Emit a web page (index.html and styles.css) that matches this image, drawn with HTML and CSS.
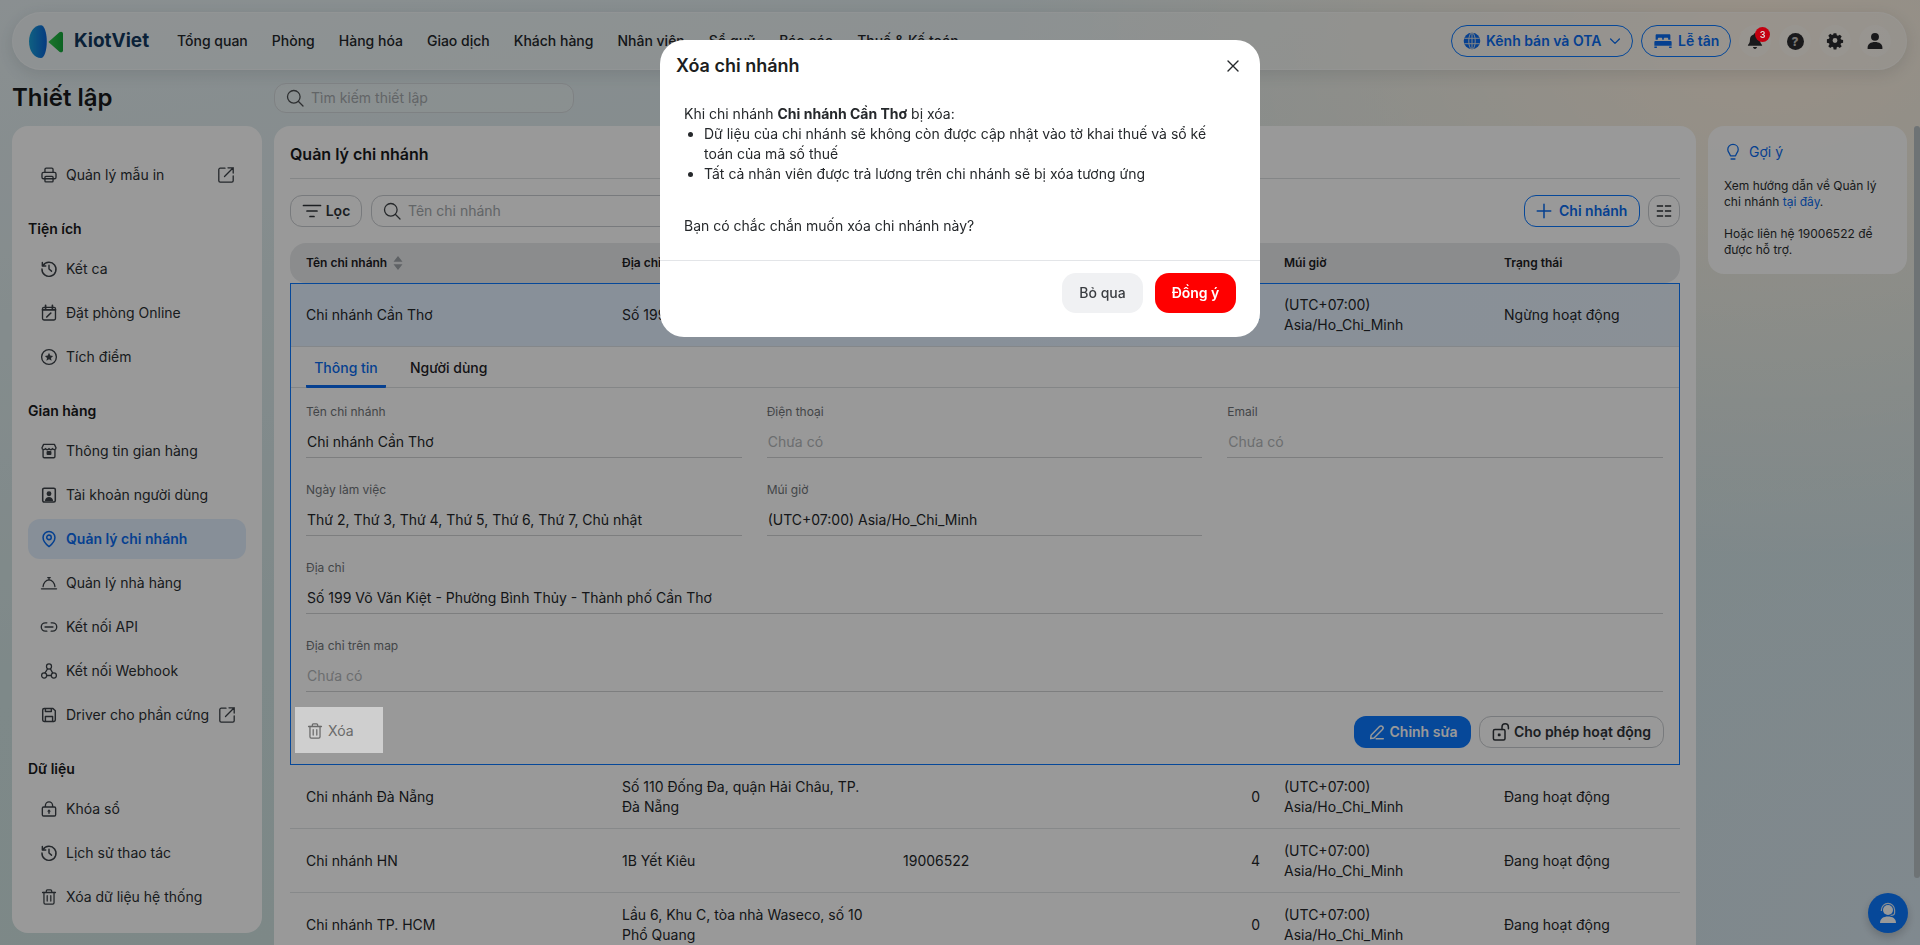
FILE: index.html
```html
<!DOCTYPE html>
<html lang="vi">
<head>
<meta charset="utf-8">
<title>Thiết lập - Quản lý chi nhánh</title>
<link rel="stylesheet" href="styles.css">
</head>
<body>
<svg class="defs" width="0" height="0" aria-hidden="true">
  <defs>
    <linearGradient id="lgBlue" x1="0" y1="0" x2="1" y2="0"><stop offset="0" stop-color="#1aa0d8"/><stop offset="1" stop-color="#0a63d6"/></linearGradient>
    <linearGradient id="lgGreen" x1="0" y1="0" x2="1" y2="0"><stop offset="0" stop-color="#2fc44a"/><stop offset="1" stop-color="#14a53a"/></linearGradient>
    <symbol id="i-search" viewBox="0 0 20 20"><circle cx="8.8" cy="8.8" r="6.3" fill="none" stroke="currentColor" stroke-width="1.3"/><path d="M13.5 13.5 18 18" fill="none" stroke="currentColor" stroke-width="1.3" stroke-linecap="round"/></symbol>
    <symbol id="i-print" viewBox="0 0 20 20"><g fill="none" stroke="currentColor" stroke-width="1.5" stroke-linejoin="round"><path d="M5.5 7V3.8c0-.9.6-1.4 1.4-1.4h6.2c.8 0 1.4.5 1.4 1.4V7"/><rect x="2.2" y="7" width="15.6" height="7.2" rx="1.8"/><rect x="5.5" y="11.5" width="9" height="6.2" rx="1"/></g></symbol>
    <symbol id="i-ext" viewBox="0 0 20 20"><g fill="none" stroke="currentColor" stroke-width="1.3" stroke-linecap="round" stroke-linejoin="round"><path d="M9 3.200H4.200c-.8 0-1.400.6-1.400 1.400v11.200c0 .8.6 1.400 1.400 1.400h11.600c.8 0 1.400-.6 1.400-1.400V11"/><path d="M8.500 11.500 17.200 2.800M12 2.800h5.200V8"/></g></symbol>
    <symbol id="i-history" viewBox="0 0 20 20"><g fill="none" stroke="currentColor" stroke-width="1.6" stroke-linecap="round" stroke-linejoin="round"><path d="M3.400 6.200A7.800 7.800 0 1 1 2.200 10"/><path d="M2.600 2.800v3.800h3.800"/><path d="M10 5.800V10l2.800 2.400"/></g></symbol>
    <symbol id="i-cal" viewBox="0 0 20 20"><g fill="none" stroke="currentColor" stroke-width="1.5" stroke-linecap="round"><rect x="2.800" y="3.800" width="14.400" height="14" rx="1.600"/><path d="M6.200 1.600v3.600M13.800 1.600v3.600M2.800 6.500h14.400" stroke-width="1.900"/><path d="M7.500 14.500l4.500-4.500" stroke-width="1.800"/></g></symbol>
    <symbol id="i-star" viewBox="0 0 20 20"><circle cx="10" cy="10" r="8.200" fill="none" stroke="currentColor" stroke-width="1.500"/><path d="M10 5.400l1.400 3 3.200.4-2.400 2.200.7 3.200-2.900-1.600-2.900 1.600.7-3.200-2.400-2.200 3.200-.4z" fill="currentColor"/></symbol>
    <symbol id="i-store" viewBox="0 0 20 20"><g fill="none" stroke="currentColor" stroke-width="1.500" stroke-linejoin="round"><path d="M4 2.600h12l1.800 3.800c0 2.600-3.200 2.600-3.900.9-.8 1.700-3.100 1.700-3.900 0-.8 1.700-3.100 1.700-3.900 0-.7 1.700-3.900 1.700-3.900-.9z"/><path d="M3.400 9v7.200c0 .8.6 1.300 1.300 1.300h10.600c.7 0 1.300-.5 1.300-1.300V9"/></g><rect x="7.300" y="10" width="5.400" height="4.400" rx="1" fill="currentColor"/></symbol>
    <symbol id="i-user-card" viewBox="0 0 20 20"><rect x="3" y="2.400" width="14" height="15.400" rx="1.600" fill="none" stroke="currentColor" stroke-width="1.700"/><circle cx="10" cy="8.600" r="2.700" fill="currentColor"/><path d="M5.400 16.600c.3-3 2.200-4.400 4.600-4.400s4.300 1.400 4.600 4.400z" fill="currentColor"/></symbol>
    <symbol id="i-pin" viewBox="0 0 20 20"><g fill="none" stroke="currentColor" stroke-width="1.700" stroke-linejoin="round"><path d="M10 18.400s-6.600-5.400-6.600-10.200a6.600 6.600 0 0 1 13.200 0c0 4.800-6.600 10.200-6.600 10.200z"/><circle cx="10" cy="8.200" r="2.500"/></g></symbol>
    <symbol id="i-bellhop" viewBox="0 0 20 20"><g fill="none" stroke="currentColor" stroke-width="1.400" stroke-linecap="round"><path d="M1.600 16.400h16.800"/><path d="M3.400 14c.4-4.200 3.200-7.400 6.600-7.400s6.200 3.200 6.600 7.400"/><path d="M8.600 4h2.800M10 4v2.400"/></g></symbol>
    <symbol id="i-link" viewBox="0 0 20 20"><g fill="none" stroke="currentColor" stroke-width="1.500" stroke-linecap="round"><path d="M7.600 5.400H6a4.600 4.600 0 0 0 0 9.200h1.600M12.400 5.400H14a4.600 4.600 0 0 1 0 9.200h-1.600M5.600 10h8.800"/></g></symbol>
    <symbol id="i-hook" viewBox="0 0 20 20"><g fill="none" stroke="currentColor" stroke-width="1.400"><circle cx="10" cy="5" r="2.800"/><circle cx="4.600" cy="15" r="2.800"/><circle cx="15.400" cy="15" r="2.800"/><path d="M8.600 7.400 5.200 12.600M11.400 7.400l2.800 5M7.400 15h5.200"/></g></symbol>
    <symbol id="i-save" viewBox="0 0 20 20"><g fill="none" stroke="currentColor" stroke-width="1.600" stroke-linejoin="round"><path d="M3 4.400c0-.9.7-1.600 1.600-1.600h9.800l2.600 2.600v10.200c0 .9-.7 1.600-1.600 1.600H4.600c-.9 0-1.600-.7-1.600-1.600z"/><path d="M6 17v-5.400h8V17M6 2.800v3.400h6.600V2.800"/></g></symbol>
    <symbol id="i-lock" viewBox="0 0 20 20"><g fill="none" stroke="currentColor" stroke-width="1.500" stroke-linejoin="round"><rect x="2.600" y="7.800" width="14.800" height="10" rx="1.400"/><path d="M6 7.800V6a4 4 0 0 1 8 0v1.800"/></g><path d="M10 10.400l2.200 2.400h-1.400v2.400H9.200v-2.400H7.800z" fill="currentColor"/></symbol>
    <symbol id="i-trash" viewBox="0 0 20 20"><g fill="none" stroke="currentColor" stroke-width="1.400" stroke-linecap="round" stroke-linejoin="round"><path d="M2.800 5h14.400M7 5V3.400c0-.7.5-1.200 1.200-1.200h3.600c.7 0 1.200.5 1.200 1.200V5"/><path d="M4.400 5v11.400c0 .9.6 1.500 1.500 1.500h8.200c.9 0 1.500-.6 1.500-1.500V5M8 8.500v6M12 8.500v6"/></g></symbol>
    <symbol id="i-filter" viewBox="0 0 20 20"><path d="M1.500 4.500h17M5 10h10M8 15.500h4" fill="none" stroke="currentColor" stroke-width="1.700" stroke-linecap="round"/></symbol>
    <symbol id="i-plus" viewBox="0 0 20 20"><path d="M10 2.500v15M2.500 10h15" fill="none" stroke="currentColor" stroke-width="1.700" stroke-linecap="round"/></symbol>
    <symbol id="i-columns" viewBox="0 0 20 20"><path d="M2 4.500h7M11 4.500h7M2 10h7M11 10h7M2 15.500h7M11 15.500h7" fill="none" stroke="currentColor" stroke-width="1.800"/></symbol>
    <symbol id="i-pen" viewBox="0 0 20 20"><g fill="none" stroke="currentColor" stroke-width="1.600" stroke-linecap="round" stroke-linejoin="round"><path d="M3.400 13.600 12.800 4c1-1 2.400-1 3.300-.1.9.9.9 2.300 0 3.200L6.700 16.600l-3.700.8z"/><path d="M9 17.600h8"/></g></symbol>
    <symbol id="i-unlock" viewBox="0 0 20 20"><g fill="none" stroke="currentColor" stroke-width="1.500" stroke-linejoin="round"><rect x="2.400" y="7.600" width="11.600" height="10.400" rx="1.500"/><path d="M11 7.500V5a3.200 3.200 0 0 1 6.400 0v1.800" stroke-linecap="round"/></g><rect x="6.800" y="11.400" width="2.800" height="2.800" rx=".6" fill="currentColor"/></symbol>
    <symbol id="i-globe" viewBox="0 0 20 20"><circle cx="10" cy="10" r="9.200" fill="currentColor"/><g fill="none" stroke="#d9dcdd" stroke-width="1.100"><ellipse cx="10" cy="10" rx="3.600" ry="9.200"/><path d="M10 1v18M1.400 7h17.200M1.400 13h17.200"/></g></symbol>
    <symbol id="i-chevron" viewBox="0 0 20 20"><path d="M4.500 7.500 10 13l5.500-5.500" fill="none" stroke="currentColor" stroke-width="1.600" stroke-linecap="round" stroke-linejoin="round"/></symbol>
    <symbol id="i-bed" viewBox="0 0 20 20"><path d="M3 2.400h14c.7 0 1.200.5 1.200 1.200v5h-2.400V7.500c0-.7-.5-1.200-1.200-1.200h-2.600c-.7 0-1.200.5-1.200 1.200v1.100H9.200V7.500c0-.7-.5-1.200-1.200-1.200H5.400c-.7 0-1.200.5-1.200 1.200v1.100H1.800v-5c0-.7.5-1.200 1.200-1.200zM1.400 10h17.200c.6 0 1 .4 1 1v4.400H.4V11c0-.6.4-1 1-1zM.4 16.200h2.800v1.600H.4zM16.800 16.200h2.800v1.600h-2.800z" fill="currentColor"/></symbol>
    <symbol id="i-bell" viewBox="0 0 20 20"><path d="M10 1.400c.8 0 1.400.6 1.400 1.300 2.700.6 4.200 2.800 4.200 5.600 0 3.200 1 4.800 2.200 6.100.3.4.1 1-.5 1H2.700c-.6 0-.8-.6-.5-1 1.200-1.300 2.200-2.900 2.200-6.100 0-2.800 1.500-5 4.200-5.600 0-.7.6-1.300 1.400-1.300zM7.800 16.800h4.400c0 1.200-1 2-2.200 2s-2.200-.8-2.200-2z" fill="currentColor"/></symbol>
    <symbol id="i-gear" viewBox="0 0 20 20"><path fill-rule="evenodd" d="M8.300 1h3.400l.5 2.600 1.500.6 2.200-1.500 2.400 2.400-1.500 2.200.6 1.500 2.600.5v3.400l-2.600.5-.6 1.500 1.500 2.200-2.400 2.400-2.200-1.500-1.500.6-.5 2.600H8.300l-.5-2.600-1.500-.6-2.200 1.500-2.400-2.400 1.500-2.200-.6-1.500-2.600-.5V8.300l2.600-.5.6-1.500-1.500-2.200 2.400-2.400 2.200 1.500 1.500-.6zM10 7a3 3 0 1 0 0 6 3 3 0 0 0 0-6z" fill="currentColor" transform="translate(1 0.5) scale(.9)"/></symbol>
    <symbol id="i-user" viewBox="0 0 20 20"><circle cx="10" cy="5.400" r="4.400" fill="currentColor"/><path d="M1.800 19v-1.800c0-3.600 3.400-6 8.200-6s8.200 2.400 8.200 6V19z" fill="currentColor"/></symbol>
    <symbol id="i-bulb" viewBox="0 0 20 20"><g fill="none" stroke="currentColor" stroke-width="1.400" stroke-linecap="round" stroke-linejoin="round"><path d="M10 1.500c3.400 0 5.800 2.500 5.800 5.600 0 3-2.400 4.600-3 7.300H7.200c-.6-2.700-3-4.300-3-7.300C4.200 4 6.600 1.500 10 1.500z"/><path d="M8 17.800h4" stroke-width="1.800"/></g></symbol>
    <symbol id="i-agent" viewBox="0 0 24 24"><circle cx="12" cy="9" r="5" fill="#fff"/><path d="M4 22c0-4.500 3.500-6.500 8-6.500s8 2 8 6.500z" fill="#fff"/><path d="M5.400 10V9a6.600 6.600 0 0 1 13.200 0v3c0 1.500-1.600 2.400-4 2.400" fill="none" stroke="#dfe9f5" stroke-width="1.200"/></symbol>
  </defs>
</svg>

<div class="app">
  <header class="topbar">
    <a class="brand">
      <svg class="brand-mark" viewBox="0 0 34 33" aria-hidden="true">
        <path d="M12 .2c3.200 0 5.800 7.200 5.800 16.300S15.200 33 12 33C5 33 0 25.500 0 16.500S5 .2 12 .2z" fill="url(#lgBlue)"/>
        <path d="M19.400 17l11-9.700c1.600-1.300 3.600-.6 3.600 1.500v16.400c0 2.100-2 2.800-3.600 1.500z" fill="url(#lgGreen)"/>
      </svg>
      <span class="brand-name">KiotViet</span>
    </a>
    <nav class="mainnav">
      <a>Tổng quan</a><a>Phòng</a><a>Hàng hóa</a><a>Giao dịch</a><a>Khách hàng</a><a>Nhân viên</a><a>Sổ quỹ</a><a>Báo cáo</a><a>Thuế &amp; Kế toán</a>
    </nav>
    <div class="top-actions">
      <button class="pill-btn pill-ota"><svg class="ic18"><use href="#i-globe"/></svg>Kênh bán và OTA<svg class="ic16"><use href="#i-chevron"/></svg></button>
      <button class="pill-btn pill-front"><svg class="ic18"><use href="#i-bed"/></svg>Lễ tân</button>
      <button class="round-btn"><svg class="ic18"><use href="#i-bell"/></svg><span class="badge">3</span></button>
      <button class="round-btn"><span class="help-ic">?</span></button>
      <button class="round-btn"><svg class="ic18"><use href="#i-gear"/></svg></button>
      <button class="round-btn"><svg class="ic18"><use href="#i-user"/></svg></button>
    </div>
  </header>

  <div class="layout">
    <h1 class="page-title">Thiết lập</h1>
    <label class="page-search"><svg class="ic20"><use href="#i-search"/></svg><span>Tìm kiếm thiết lập</span></label>
    <span></span>

    <aside class="sidebar">
      <a class="side-item"><svg class="ic18"><use href="#i-print"/></svg>Quản lý mẫu in<svg class="ic20 side-ext"><use href="#i-ext"/></svg></a>
      <h3 class="side-title">Tiện ích</h3>
      <a class="side-item"><svg class="ic18"><use href="#i-history"/></svg>Kết ca</a>
      <a class="side-item"><svg class="ic18"><use href="#i-cal"/></svg>Đặt phòng Online</a>
      <a class="side-item"><svg class="ic18"><use href="#i-star"/></svg>Tích điểm</a>
      <h3 class="side-title">Gian hàng</h3>
      <a class="side-item"><svg class="ic18"><use href="#i-store"/></svg>Thông tin gian hàng</a>
      <a class="side-item"><svg class="ic18"><use href="#i-user-card"/></svg>Tài khoản người dùng</a>
      <a class="side-item is-active"><svg class="ic18"><use href="#i-pin"/></svg>Quản lý chi nhánh</a>
      <a class="side-item"><svg class="ic18"><use href="#i-bellhop"/></svg>Quản lý nhà hàng</a>
      <a class="side-item"><svg class="ic18"><use href="#i-link"/></svg>Kết nối API</a>
      <a class="side-item"><svg class="ic18"><use href="#i-hook"/></svg>Kết nối Webhook</a>
      <a class="side-item"><svg class="ic18"><use href="#i-save"/></svg>Driver cho phần cứng<svg class="ic20 side-ext"><use href="#i-ext"/></svg></a>
      <h3 class="side-title">Dữ liệu</h3>
      <a class="side-item"><svg class="ic18"><use href="#i-lock"/></svg>Khóa sổ</a>
      <a class="side-item"><svg class="ic18"><use href="#i-history"/></svg>Lịch sử thao tác</a>
      <a class="side-item"><svg class="ic18"><use href="#i-trash"/></svg>Xóa dữ liệu hệ thống</a>
    </aside>

    <main class="panel">
      <h2 class="panel-title">Quản lý chi nhánh</h2>
      <div class="toolbar">
        <button class="tool-btn"><svg class="ic20"><use href="#i-filter"/></svg>Lọc</button>
        <label class="tool-search"><svg class="ic20"><use href="#i-search"/></svg><span>Tên chi nhánh</span></label>
        <button class="add-btn"><svg class="ic18"><use href="#i-plus"/></svg>Chi nhánh</button>
        <button class="col-btn"><svg class="ic18"><use href="#i-columns"/></svg></button>
      </div>

      <div class="table">
        <div class="row row-head">
          <div class="cell-sort">Tên chi nhánh<svg class="sort" viewBox="0 0 10 14" aria-hidden="true"><path d="M5 0l4.500 5.800H.5zM5 14 .5 8.200h9z" fill="currentColor"/></svg></div>
          <div>Địa chỉ</div>
          <div>Điện thoại</div>
          <div class="num">Người dùng</div>
          <div>Múi giờ</div>
          <div>Trạng thái</div>
        </div>

        <div class="selected">
          <div class="row row-sel">
            <div>Chi nhánh Cần Thơ</div>
            <div>Số 199 Võ Văn Kiệt</div>
            <div></div>
            <div class="num">2</div>
            <div>(UTC+07:00)<br>Asia/Ho_Chi_Minh</div>
            <div>Ngừng hoạt động</div>
          </div>
          <div class="tabs">
            <a class="tab is-active">Thông tin</a>
            <a class="tab">Người dùng</a>
          </div>
          <div class="form">
            <div class="field"><span class="f-label">Tên chi nhánh</span><span class="f-value">Chi nhánh Cần Thơ</span></div>
            <div class="field"><span class="f-label">Điện thoại</span><span class="f-value is-empty">Chưa có</span></div>
            <div class="field"><span class="f-label">Email</span><span class="f-value is-empty">Chưa có</span></div>
            <div class="field"><span class="f-label">Ngày làm việc</span><span class="f-value">Thứ 2, Thứ 3, Thứ 4, Thứ 5, Thứ 6, Thứ 7, Chủ nhật</span></div>
            <div class="field"><span class="f-label">Múi giờ</span><span class="f-value">(UTC+07:00) Asia/Ho_Chi_Minh</span></div>
            <div></div>
            <div class="field field-wide"><span class="f-label">Địa chỉ</span><span class="f-value">Số 199 Võ Văn Kiệt - Phường Bình Thủy - Thành phố Cần Thơ</span></div>
            <div class="field field-wide"><span class="f-label">Địa chỉ trên map</span><span class="f-value is-empty">Chưa có</span></div>
          </div>
          <div class="form-actions">
            <button class="del-btn"><svg class="ic18"><use href="#i-trash"/></svg>Xóa</button>
            <button class="edit-btn"><svg class="ic18"><use href="#i-pen"/></svg>Chỉnh sửa</button>
            <button class="enable-btn"><svg class="ic20"><use href="#i-unlock"/></svg>Cho phép hoạt động</button>
          </div>
        </div>

        <div class="row">
          <div>Chi nhánh Đà Nẵng</div>
          <div>Số 110 Đống Đa, quận Hải Châu, TP. Đà Nẵng</div>
          <div></div>
          <div class="num">0</div>
          <div>(UTC+07:00)<br>Asia/Ho_Chi_Minh</div>
          <div>Đang hoạt động</div>
        </div>
        <div class="row">
          <div>Chi nhánh HN</div>
          <div>1B Yết Kiêu</div>
          <div>19006522</div>
          <div class="num">4</div>
          <div>(UTC+07:00)<br>Asia/Ho_Chi_Minh</div>
          <div>Đang hoạt động</div>
        </div>
        <div class="row">
          <div>Chi nhánh TP. HCM</div>
          <div>Lầu 6, Khu C, tòa nhà Waseco, số 10 Phổ Quang</div>
          <div></div>
          <div class="num">0</div>
          <div>(UTC+07:00)<br>Asia/Ho_Chi_Minh</div>
          <div>Đang hoạt động</div>
        </div>
      </div>
    </main>

    <aside class="tips">
      <div class="tips-head"><svg class="ic18"><use href="#i-bulb"/></svg>Gợi ý</div>
      <p>Xem hướng dẫn về Quản lý chi nhánh <a>tại đây</a>.</p>
      <p>Hoặc liên hệ 19006522 để được hỗ trợ.</p>
    </aside>
  </div>
</div>

<div class="scroll-thumb"></div>
<button class="chat-btn"><svg class="ic24"><use href="#i-agent"/></svg></button>

<div class="overlay">
  <section class="modal">
    <header class="modal-head">
      <h2>Xóa chi nhánh</h2>
      <svg class="modal-close" viewBox="0 0 14 14" aria-hidden="true"><path d="M2 2l10 10M12 2 2 12" fill="none" stroke="currentColor" stroke-width="1.400" stroke-linecap="round"/></svg>
    </header>
    <div class="modal-body">
      <div>Khi chi nhánh <strong>Chi nhánh Cần Thơ</strong> bị xóa:</div>
      <ul>
        <li>Dữ liệu của chi nhánh sẽ không còn được cập nhật vào tờ khai thuế và sổ kế toán của mã số thuế</li>
        <li>Tất cả nhân viên được trả lương trên chi nhánh sẽ bị xóa tương ứng</li>
      </ul>
      <div>Bạn có chắc chắn muốn xóa chi nhánh này?</div>
    </div>
    <footer class="modal-foot">
      <button class="btn-cancel">Bỏ qua</button>
      <button class="btn-ok">Đồng ý</button>
    </footer>
  </section>
</div>
</body>
</html>
```

FILE: styles.css
```css
* { box-sizing: border-box; }
html, body { margin: 0; height: 945px; overflow: hidden; }
body {
  font-family: Inter, "Noto Sans", sans-serif;
  font-size: 14px;
  line-height: 20px;
  color: #1f2328;
  background:
    radial-gradient(ellipse 760px 520px at 92% 4%, #fff1e0 0, rgba(255, 241, 224, 0) 100%),
    radial-gradient(ellipse 900px 700px at 100% 100%, #d6e4ee 0, rgba(214, 228, 238, 0) 100%),
    linear-gradient(170deg, #e6eff2 0, #d2e4e4 55%, #cfe2e0 100%);
  background-color: #dce8ea;
}
button { font: inherit; cursor: pointer; background: none; border: 0; padding: 0; color: inherit; }
h1, h2, h3, p, ul { margin: 0; }
a { color: inherit; text-decoration: none; }
svg { display: block; flex: none; }
.defs { position: absolute; }
.ic16 { width: 16px; height: 16px; }
.ic18 { width: 18px; height: 18px; }
.ic20 { width: 20px; height: 20px; }
.ic24 { width: 24px; height: 24px; }

.app { padding: 12px 13px 0 12px; }

.topbar {
  height: 58px;
  display: flex;
  align-items: center;
  padding: 0 15px 0 16px;
  border-radius: 29px;
  background: rgba(255, 255, 255, .34);
  border: 1px solid rgba(255, 255, 255, .35);
  box-shadow: 0 4px 16px rgba(60, 70, 80, .14);
}
.brand { display: flex; align-items: center; gap: 11px; width: 148px; }
.brand-mark { width: 34px; height: 33px; }
.brand-name { font-size: 19px; font-weight: 700; color: #12385e; }
.mainnav { display: flex; gap: 24px; font-weight: 500; color: #23272b; white-space: nowrap; }
.top-actions { margin-left: auto; display: flex; align-items: center; gap: 8px; }
.pill-btn {
  height: 32px;
  display: flex;
  align-items: center;
  border: 1px solid #0a78ff;
  border-radius: 16px;
  color: #0a6cf0;
  font-weight: 600;
  background: rgba(255, 255, 255, .14);
}
.pill-ota { width: 182px; padding-left: 11px; gap: 5px; }
.pill-ota .ic16 { margin-left: 1px; }
.pill-front { width: 90px; padding-left: 12px; gap: 6px; }
.round-btn {
  position: relative;
  width: 32px;
  height: 32px;
  border-radius: 50%;
  display: grid;
  place-items: center;
  background: rgba(255, 255, 255, .3);
  color: #2a2b2e;
}
.help-ic {
  width: 17px;
  height: 17px;
  border-radius: 50%;
  background: #2a2b2e;
  color: #c3c0bd;
  font-size: 12px;
  font-weight: 800;
  line-height: 17px;
  text-align: center;
}
.badge {
  position: absolute;
  z-index: 11;
  top: 2px;
  right: 1px;
  width: 15px;
  height: 15px;
  border-radius: 50%;
  background: #c40010;
  color: #ddd;
  font-size: 9px;
  font-weight: 600;
  line-height: 15px;
  text-align: center;
}

.layout {
  display: grid;
  grid-template-columns: 250px 1422px 199px;
  column-gap: 12px;
  row-gap: 13px;
  align-items: start;
  margin-top: 13px;
}
.page-title { font-size: 24px; font-weight: 600; line-height: 30px; color: #18191b; }
.page-search {
  height: 30px;
  width: 300px;
  display: flex;
  align-items: center;
  gap: 6px;
  padding-left: 10px;
  border: 1px solid #d3d7da;
  border-radius: 12px;
  background: rgba(255, 255, 255, .22);
  color: #4c4f52;
}
.page-search span { color: #a4a8ac; }

.sidebar {
  background: #fff;
  border-radius: 16px;
  padding: 29px 16px 16px;
  display: flex;
  flex-direction: column;
  gap: 4px;
}
.side-item {
  height: 40px;
  display: flex;
  align-items: center;
  gap: 8px;
  padding: 0 12px;
  border-radius: 12px;
  color: #2b2f33;
  white-space: nowrap;
}
.side-item .ic18 { color: #3c4248; }
.side-ext { margin-left: auto; margin-right: -2px; color: #3c4248; }
.side-item.is-active { background: #e2effd; color: #0a6cf0; font-weight: 600; }
.side-item.is-active .ic18 { color: #0a6cf0; }
.side-title { font-size: 14px; line-height: 20px; font-weight: 600; color: #18191b; margin: 20px 0 6px; }

.panel { background: #fff; border-radius: 16px 16px 0 0; padding: 0 16px; height: 900px; }
.panel-title {
  font-size: 16px;
  font-weight: 600;
  line-height: 24px;
  padding: 16px 0 12px;
  border-bottom: 1px solid #dcdfe2;
  color: #18191b;
  height: 53px;
}
.toolbar { display: flex; align-items: center; gap: 8px; margin-top: 16px; height: 32px; }
.tool-btn {
  width: 72px;
  height: 32px;
  display: flex;
  align-items: center;
  justify-content: center;
  gap: 4px;
  border: 1px solid #c9ccd0;
  border-radius: 12px;
  font-weight: 600;
  color: #30343a;
}
.tool-search {
  width: 620px;
  height: 32px;
  display: flex;
  align-items: center;
  gap: 6px;
  padding-left: 10px;
  border: 1px solid #c9ccd0;
  border-radius: 12px;
  margin-left: 1px;
  color: #3f4347;
}
.tool-search span { color: #a4a8ac; }
.add-btn {
  margin-left: auto;
  width: 116px;
  height: 32px;
  display: flex;
  align-items: center;
  padding-left: 10px;
  gap: 6px;
  border: 1px solid #0a78ff;
  border-radius: 12px;
  color: #0a6cf0;
  font-weight: 600;
}
.col-btn {
  width: 32px;
  height: 32px;
  display: grid;
  place-items: center;
  border: 1px solid #c9ccd0;
  border-radius: 12px;
  color: #30343a;
}

.table { margin-top: 16px; }
.row {
  display: grid;
  grid-template-columns: 316px 281px 237px 120px 244px 1fr;
  align-items: center;
  height: 64px;
  padding-left: 16px;
  border-bottom: 1px solid #e2e4e6;
  color: #232629;
}
.row > div:nth-child(2) { padding-right: 24px; }
.row > .num { text-align: right; }
.row > .num + div { margin-left: 24px; }
.row-head {
  height: 40px;
  border: 0;
  border-radius: 16px;
  background: #e8eaec;
  font-size: 12px;
  font-weight: 600;
  color: #1d2024;
}
.cell-sort { display: flex; align-items: center; gap: 6px; }
.sort { width: 10px; height: 14px; color: #9ea3a8; }
.selected { border: 1px solid #0a78ff; height: 482px; padding: 0 16px 0 15px; }
.row-sel {
  height: 63px;
  margin: 0 -16px 0 -15px;
  padding-left: 15px;
  background: linear-gradient(90deg, #e3f0ff 0, #e3f0ff 50%, #e6f0fb 100%);
  border-bottom: 1px solid #dde2e6;
}
.tabs { display: flex; gap: 16px; height: 41px; margin: 0 -16px 0 -15px; padding-left: 15px; border-bottom: 1px solid #dcdfe2; }
.tab { height: 41px; padding: 11px 8px 0; min-width: 80px; text-align: center; font-weight: 500; color: #1e2125; }
.tab.is-active { color: #0a6cf0; border-bottom: 3px solid #0a6cf0; border-radius: 0 0 1px 1px; }
.form { display: grid; grid-template-columns: repeat(3, 1fr); column-gap: 25px; row-gap: 24px; padding-top: 16px; }
.field { display: flex; flex-direction: column; }
.field-wide { grid-column: 1 / -1; }
.f-label { font-size: 12px; line-height: 16px; color: #6f7478; }
.f-value { margin-top: 4px; padding: 8px 1px 5px; border-bottom: 1px solid #d0d2d4; color: #232629; height: 34px; }
.f-value.is-empty { color: #b4b7ba; }

.form-actions { display: flex; align-items: center; gap: 8px; margin: 15px -1px 0 0; }
.del-btn {
  position: relative;
  z-index: 11;
  width: 88px;
  height: 46px;
  margin-left: -11px;
  margin-right: auto;
  padding: 2px 0 0 11px;
  display: flex;
  align-items: center;
  gap: 4px;
  background: #cfcfcf;
  color: #6a6a6a;
}
.edit-btn {
  width: 117px;
  height: 32px;
  margin-top: 4px;
  display: flex;
  align-items: center;
  justify-content: center;
  gap: 4px;
  background: #0a78ff;
  border-radius: 12px;
  color: #fff;
  font-weight: 600;
}
.enable-btn {
  width: 185px;
  height: 32px;
  margin-top: 4px;
  display: flex;
  align-items: center;
  justify-content: center;
  gap: 3px;
  padding-right: 1px;
  border: 1px solid #c9ccd0;
  border-radius: 12px;
  color: #30343a;
  font-weight: 600;
}

.tips { background: rgba(255, 255, 255, .9); border-radius: 16px; padding: 16px; height: 148px; font-size: 12px; line-height: 16px; color: #2b2e31; }
.tips-head { display: flex; align-items: center; gap: 7px; color: #0a6cf0; font-size: 14px; height: 20px; margin: 0 0 16px; }
.tips p + p { margin-top: 16px; }
.tips a { color: #0a6cf0; }

.scroll-thumb { position: fixed; top: 126px; right: 0; width: 6px; height: 752px; border-radius: 3px; background: #b7c0c4; }
.chat-btn {
  position: fixed;
  left: 1868px;
  top: 893px;
  width: 40px;
  height: 40px;
  border-radius: 50%;
  background: #0a78ff;
  display: grid;
  place-items: center;
  box-shadow: 0 4px 10px rgba(0, 0, 0, .2);
}

.overlay {
  position: fixed;
  inset: 0;
  z-index: 10;
  background: rgba(0, 0, 0, .4);
  display: flex;
  justify-content: center;
  align-items: flex-start;
  padding-top: 40px;
}
.modal { width: 600px; height: 297px; background: #fff; border-radius: 24px; color: #25282b; display: flex; flex-direction: column; }
.modal-head { height: 52px; display: flex; align-items: center; justify-content: space-between; padding: 0 20px 0 16px; }
.modal-head h2 { font-size: 18px; font-weight: 600; line-height: 26px; color: #1c1e21; }
.modal-close { width: 14px; height: 14px; color: #25282b; }
.modal-body { padding: 12px 24px 0; height: 169px; border-bottom: 1px solid #e3e5e8; }
.modal-body ul { padding-left: 20px; margin-bottom: 32px; }
.modal-foot { flex: 1; display: flex; justify-content: flex-end; gap: 12px; padding: 12px 24px 0; }
.btn-cancel, .btn-ok { width: 81px; height: 40px; border-radius: 14px; font-weight: 600; }
.btn-cancel { background: #f0f1f3; color: #3a3d41; font-weight: 500; }
.btn-ok { background: #f00; color: #fff; }
```
